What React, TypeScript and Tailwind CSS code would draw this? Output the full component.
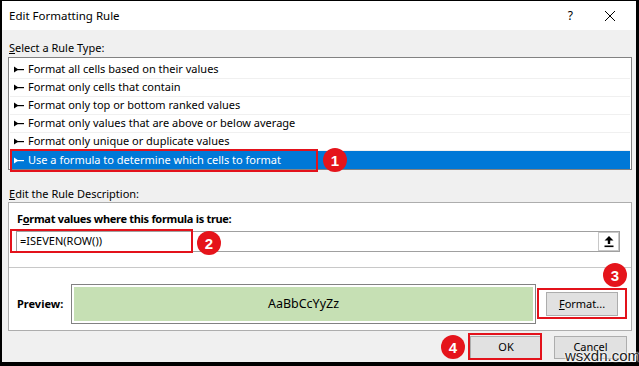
import React from "react";

const rules = [
  "Format all cells based on their values",
  "Format only cells that contain",
  "Format only top or bottom ranked values",
  "Format only values that are above or below average",
  "Format only unique or duplicate values",
  "Use a formula to determine which cells to format",
];

function Bullet() {
  return (
    <svg width="10" height="7" viewBox="0 0 10 7" className="mr-[4px] shrink-0">
      <polygon points="0,0.5 4.5,3.5 0,6.5" fill="currentColor" />
      <rect x="2" y="3" width="8" height="1.2" fill="currentColor" />
    </svg>
  );
}

function Badge({ n, className }: { n: number; className: string }) {
  return (
    <div
      className={`absolute flex h-[24px] w-[24px] items-center justify-center rounded-full bg-[#e5141b] text-[15px] font-bold leading-none text-white ${className}`}
      style={{ fontFamily: "'Liberation Sans', Arial, sans-serif" }}
    >
      {n}
    </div>
  );
}

export default function App() {
  return (
    <div
      className="relative h-[366px] w-[639px] bg-black pb-[4px] pl-[2px] pr-[3px] pt-[1px] text-[11px] text-black"
      style={{ fontFamily: "'Noto Sans', 'Open Sans', sans-serif" }}
    >
      <div className="flex h-full flex-col bg-[#f0f0f0]">
        {/* title bar */}
        <div className="flex h-[29px] shrink-0 items-center bg-white pl-[7px]">
          <span className="text-[11.5px]">Edit Formatting Rule</span>
          <span className="ml-auto mr-[31px] text-[12px]">?</span>
          <svg width="12" height="12" viewBox="0 0 12 12" className="mr-[20px]">
            <path d="M1 1 L11 11 M11 1 L1 11" stroke="#000" strokeWidth="1" />
          </svg>
        </div>

        <div className="flex flex-1 flex-col pl-[6px] pr-[4px]">
          <div className="mt-[10px] h-[16px] pl-[1px] leading-[16px]">
            <span className="underline">S</span>elect a Rule Type:
          </div>

          {/* rule list */}
          <div className="mt-[1px] h-[113px] border border-[#828282] bg-white px-[1px] pt-[3px]">
            {rules.map((r, i) => (
              <div
                key={r}
                className={`flex h-[18px] items-center pl-[4px] ${
                  i === rules.length - 1
                    ? "bg-[#0078d7] text-white"
                    : "border-b border-[#f0f0f0] text-black"
                }`}
              >
                <Bullet />
                {r}
              </div>
            ))}
          </div>

          <div className="mt-[16px] h-[16px] pl-[1px] leading-[16px]">
            <span className="underline">E</span>dit the Rule Description:
          </div>

          {/* description box */}
          <div className="flex h-[129px] flex-col border border-[#adadad] bg-white">
            <div className="mt-[8px] h-[16px] pl-[8px] font-bold leading-[16px] tracking-[-0.3px]">
              F<span className="underline">o</span>rmat values where this formula is true:
            </div>
            <div className="ml-[7px] mr-[11px] mt-[4px] flex h-[21px] items-center border border-[#a0a0a0] bg-white">
              <span className="pl-[3px]">=ISEVEN(ROW())</span>
              <div className="ml-auto flex h-full w-[21px] items-center justify-center border border-[#c8c8c8] bg-white">
                <svg width="12" height="13" viewBox="0 0 12 13">
                  <path d="M6 1 L10.5 5.5 L7.2 5.5 L7.2 9 L4.8 9 L4.8 5.5 L1.5 5.5 Z" fill="#000" />
                  <rect x="1.5" y="10.5" width="9" height="1.6" fill="#000" />
                </svg>
              </div>
            </div>
            <div className="mt-[15px] border-t border-[#c8c8c8]" />
            <div className="mt-[16px] flex items-center">
              <div className="w-[62px] pl-[8px] font-bold">Preview:</div>
              <div className="flex h-[40px] w-[465px] border border-[#828282] bg-white p-[2px]">
                <div className="flex flex-1 items-center justify-center bg-[#c6e0b4] text-[12.5px]">
                  AaBbCcYyZz
                </div>
              </div>
              <button className="ml-[10px] flex h-[24px] w-[72px] items-center justify-center border border-[#adadad] bg-[#e1e1e1]">
                <span className="underline">F</span>ormat...
              </button>
            </div>
          </div>

          {/* footer buttons */}
          <div className="mt-[5px] flex justify-end gap-[12px] pr-[5px]">
            <button className="flex h-[23px] w-[72px] items-center justify-center border border-[#adadad] bg-[#e1e1e1]">
              OK
            </button>
            <button className="flex h-[23px] w-[73px] items-center justify-center border border-[#adadad] bg-[#e1e1e1]">
              Cancel
            </button>
          </div>
        </div>
      </div>

      {/* annotations */}
      <div className="absolute left-[10px] top-[149px] h-[23px] w-[308px] border-2 border-[#e3121b]" />
      <Badge n={1} className="left-[323px] top-[148px]" />
      <div className="absolute left-[10px] top-[229px] h-[24px] w-[183px] border-2 border-[#e3121b]" />
      <Badge n={2} className="left-[197px] top-[231px]" />
      <div className="absolute left-[537px] top-[288px] h-[31px] w-[90px] border-2 border-[#e3121b]" />
      <Badge n={3} className="left-[603px] top-[263px]" />
      <div className="absolute left-[468px] top-[333px] h-[27px] w-[74px] border-2 border-[#e3121b]" />
      <Badge n={4} className="left-[441px] top-[335px]" />

      <div
        className="absolute left-[565px] top-[348px] text-[15px] leading-none text-[#222]"
        style={{
          fontFamily: "'Liberation Sans', Arial, sans-serif",
          textShadow: "0 0 2px #fff, 0 0 2px #fff, 0 0 2px #fff",
        }}
      >
        wsxdn.com
      </div>
    </div>
  );
}
